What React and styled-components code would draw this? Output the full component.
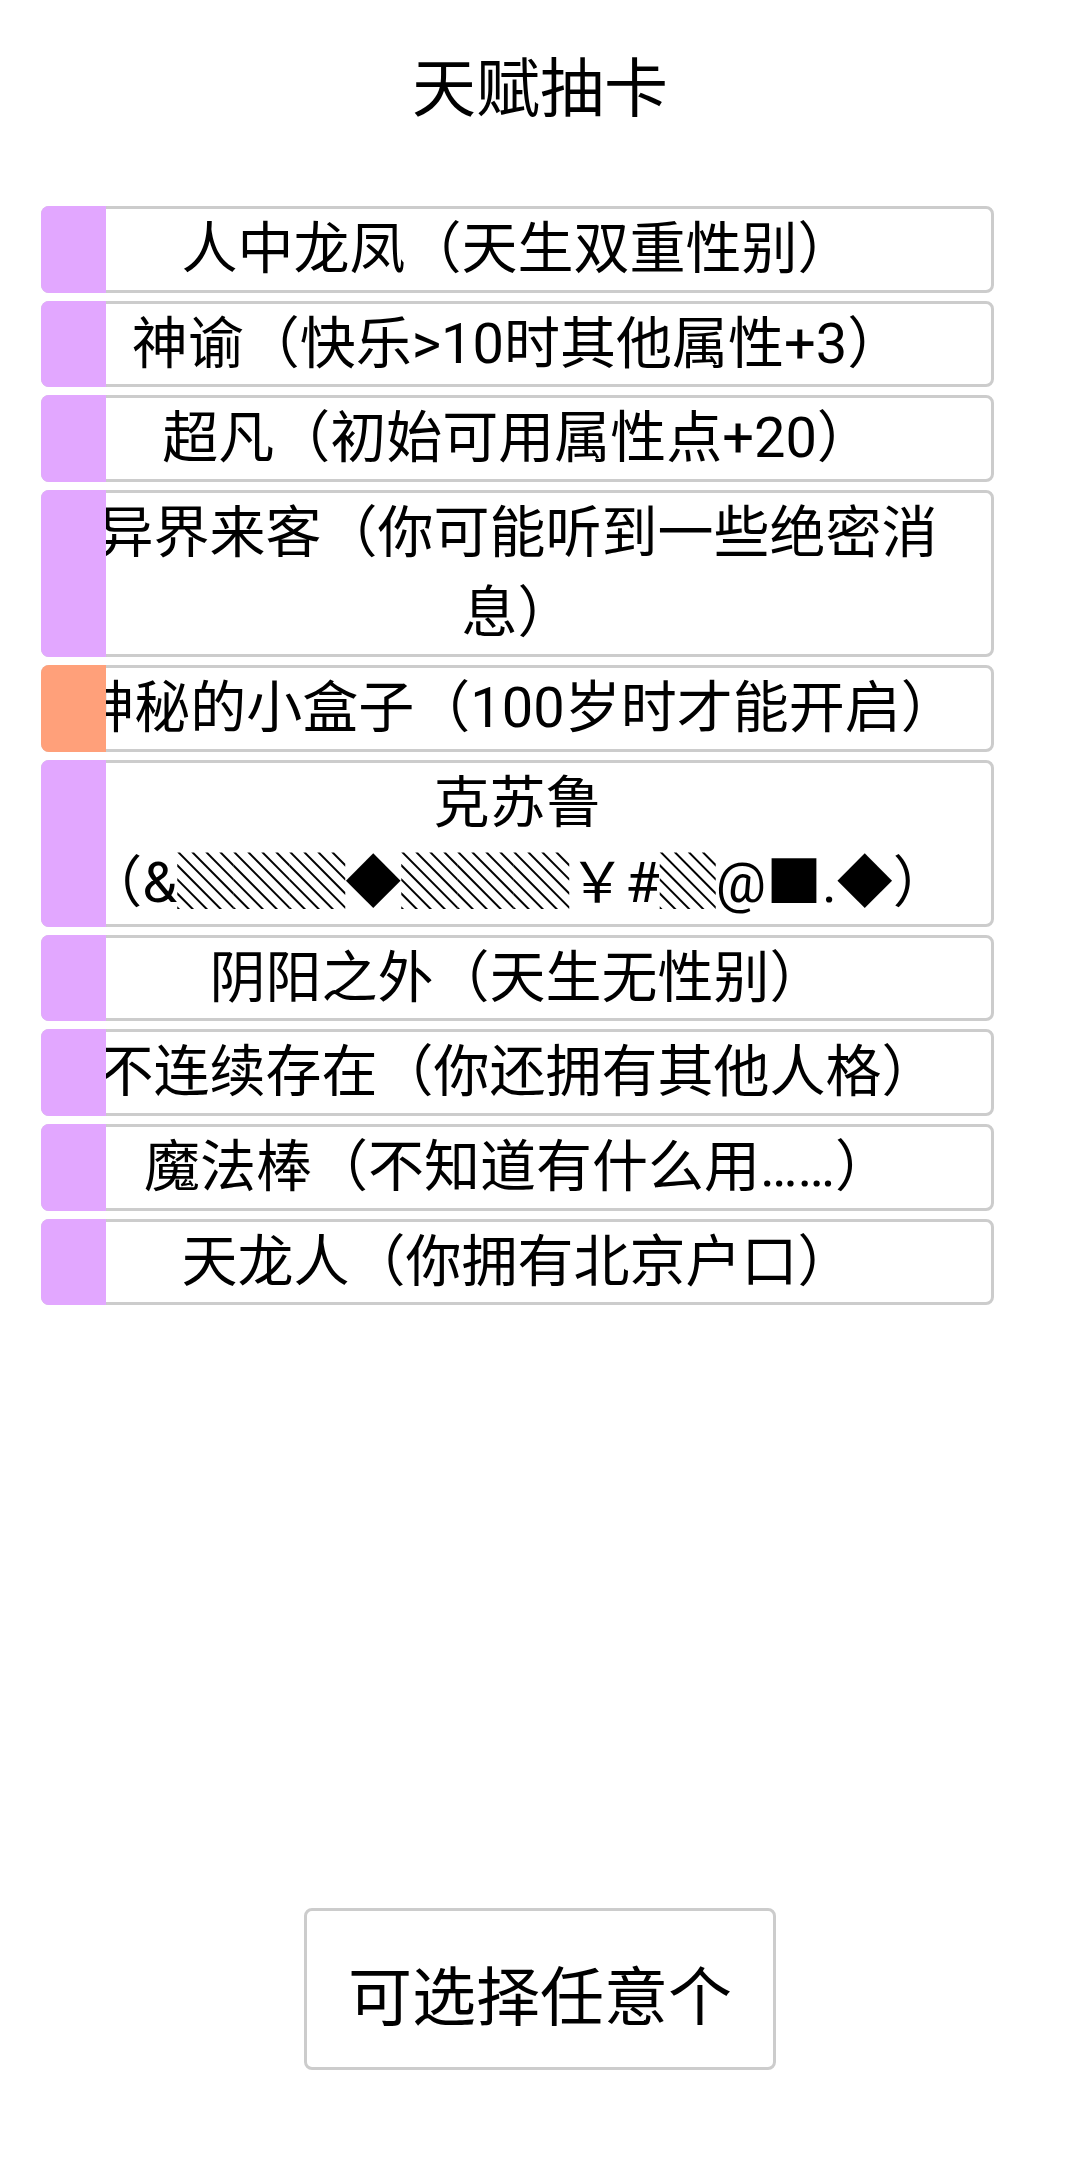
import React from "react"
import styled, { createGlobalStyle } from "styled-components"

const talents = [
  { id: 1, grade: 2, text: "人中龙凤（天生双重性别）" },
  { id: 2, grade: 2, text: "神谕（快乐>10时其他属性+3）" },
  { id: 3, grade: 2, text: "超凡（初始可用属性点+20）" },
  { id: 4, grade: 2, text: "异界来客（你可能听到一些绝密消息）" },
  { id: 5, grade: 3, text: "神秘的小盒子（100岁时才能开启）" },
  { id: 6, grade: 2, text: "克苏鲁（&▒▒▒◆▒▒▒￥#▒@■.◆）" },
  { id: 7, grade: 2, text: "阴阳之外（天生无性别）" },
  { id: 8, grade: 2, text: "不连续存在（你还拥有其他人格）" },
  { id: 9, grade: 2, text: "魔法棒（不知道有什么用……）" },
  { id: 10, grade: 2, text: "天龙人（你拥有北京户口）" },
]

const gradeColors = {
  1: "#6495ed",
  2: "#e2a7ff",
  3: "#ffa07a",
}

const fontStack = `Roboto, "Noto Sans CJK SC", "Noto Sans", sans-serif`

const GlobalStyle = createGlobalStyle`
  html, body {
    margin: 0;
    padding: 0;
    background: #fff;
  }
  body {
    font-family: ${fontStack};
    color: #000;
  }
`

const Page = styled.div`
  min-height: 100vh;
  display: flex;
  flex-direction: column;
  box-sizing: border-box;
`

const Title = styled.h1`
  margin: 58px 0 0;
  font-size: 64px;
  line-height: 64px;
  font-weight: 400;
  text-align: center;
`

const List = styled.ul`
  list-style: none;
  margin: 84px 0 0 41px;
  padding: 0;
  width: 953px;
  display: flex;
  flex-direction: column;
  gap: 8px;
`

const Card = styled.li`
  position: relative;
  box-sizing: border-box;
  border: 3px solid #cccccc;
  border-radius: 8px;
  background: #fff;
  padding: 0 29px;
  font-size: 56px;
  line-height: 80.6px;
  text-align: center;
`

const Strip = styled.span`
  position: absolute;
  left: -3px;
  top: -3px;
  bottom: -3px;
  width: 65px;
  border-radius: 8px 0 0 8px;
  background: ${(p) => p.$color};
`

const ChooseButton = styled.button`
  margin: auto auto 88px;
  width: 472px;
  height: 162px;
  box-sizing: border-box;
  border: 3px solid #cccccc;
  border-radius: 8px;
  background: #fff;
  color: #000;
  font-family: ${fontStack};
  font-size: 64px;
  padding: 6px 0 0;
  cursor: pointer;
`

export default function App() {
  return (
    <>
      <GlobalStyle />
      <Page>
        <Title>天赋抽卡</Title>
        <List>
          {talents.map((item) => (
            <Card key={item.id}>
              {item.text}
              <Strip $color={gradeColors[item.grade]} />
            </Card>
          ))}
        </List>
        <ChooseButton>可选择任意个</ChooseButton>
      </Page>
    </>
  )
}
